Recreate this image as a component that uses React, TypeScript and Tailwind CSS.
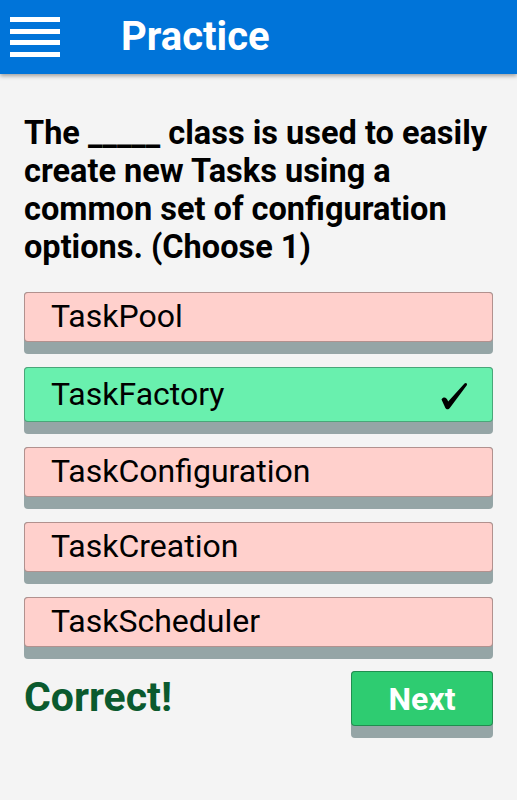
import React from 'react'

interface Choice {
  text: string
  correct?: boolean
}

const choices: Choice[] = [
  { text: 'TaskPool' },
  { text: 'TaskFactory', correct: true },
  { text: 'TaskConfiguration' },
  { text: 'TaskCreation' },
  { text: 'TaskScheduler' },
]

function Check() {
  return (
    <svg width="28" height="28" viewBox="0 0 28 28" className="mt-[2px]">
      <path
        d="M1.5 17.5 C3.5 14.5 6.5 15 8.2 19.5 L24.5 1.5 C25.8 0.2 27.8 1.4 26.8 3.2 L9.8 26 C8.6 27.8 6.4 27.8 5.4 26 Z"
        fill="#000"
      />
    </svg>
  )
}

export default function App() {
  return (
    <div
      className="min-h-[800px] w-[517px] bg-[#f4f4f4] overflow-hidden"
      style={{ fontFamily: 'Roboto, "Liberation Sans", sans-serif' }}
    >
      {/* header */}
      <div className="h-[74px] bg-[#0074d9] flex items-center shadow-[0_2px_4px_rgba(0,0,0,0.35)] relative z-10">
        <div className="ml-[10px] w-[50px] flex flex-col gap-[6.5px]">
          <div className="h-[5px] bg-white" />
          <div className="h-[5px] bg-white" />
          <div className="h-[5px] bg-white" />
          <div className="h-[5px] bg-white" />
        </div>
        <h1 className="ml-[61px] text-white font-bold text-[40px] leading-none">Practice</h1>
      </div>

      <div className="px-[24px] pt-[40px]">
        {/* question */}
        <p className="text-black font-bold text-[32.5px] leading-[38px]">
          The _____ class is used to easily create new Tasks using a common set of configuration options. (Choose 1)
        </p>

        {/* choices */}
        <div className="mt-[26px] flex flex-col gap-[13px]">
          {choices.map((c) => (
            <div key={c.text} className="rounded-[4px] bg-[#95a5a6] pb-[12px]">
              <div
                className={`rounded-[4px] border border-black/30 flex items-center justify-between pl-[26px] pr-[24px] text-black text-[32px] ${
                  c.correct ? 'bg-[#69f0ae] h-[55px]' : 'bg-[#ffd0cc] h-[50px]'
                }`}
              >
                <span className="-mt-[2px]">{c.text}</span>
                {c.correct && <Check />}
              </div>
            </div>
          ))}
        </div>

        {/* footer */}
        <div className="mt-[12px] flex justify-between items-start">
          <div className="pt-[4px] text-[#0b5a2e] font-bold text-[41px] leading-[44px]">Correct!</div>
          <div className="rounded-[4px] bg-[#95a5a6] pb-[12px] w-[142px]">
            <button className="w-full h-[55px] rounded-[4px] bg-[#2ecc71] border border-black/30 text-white font-bold text-[32px]">
              Next
            </button>
          </div>
        </div>
      </div>
    </div>
  )
}
